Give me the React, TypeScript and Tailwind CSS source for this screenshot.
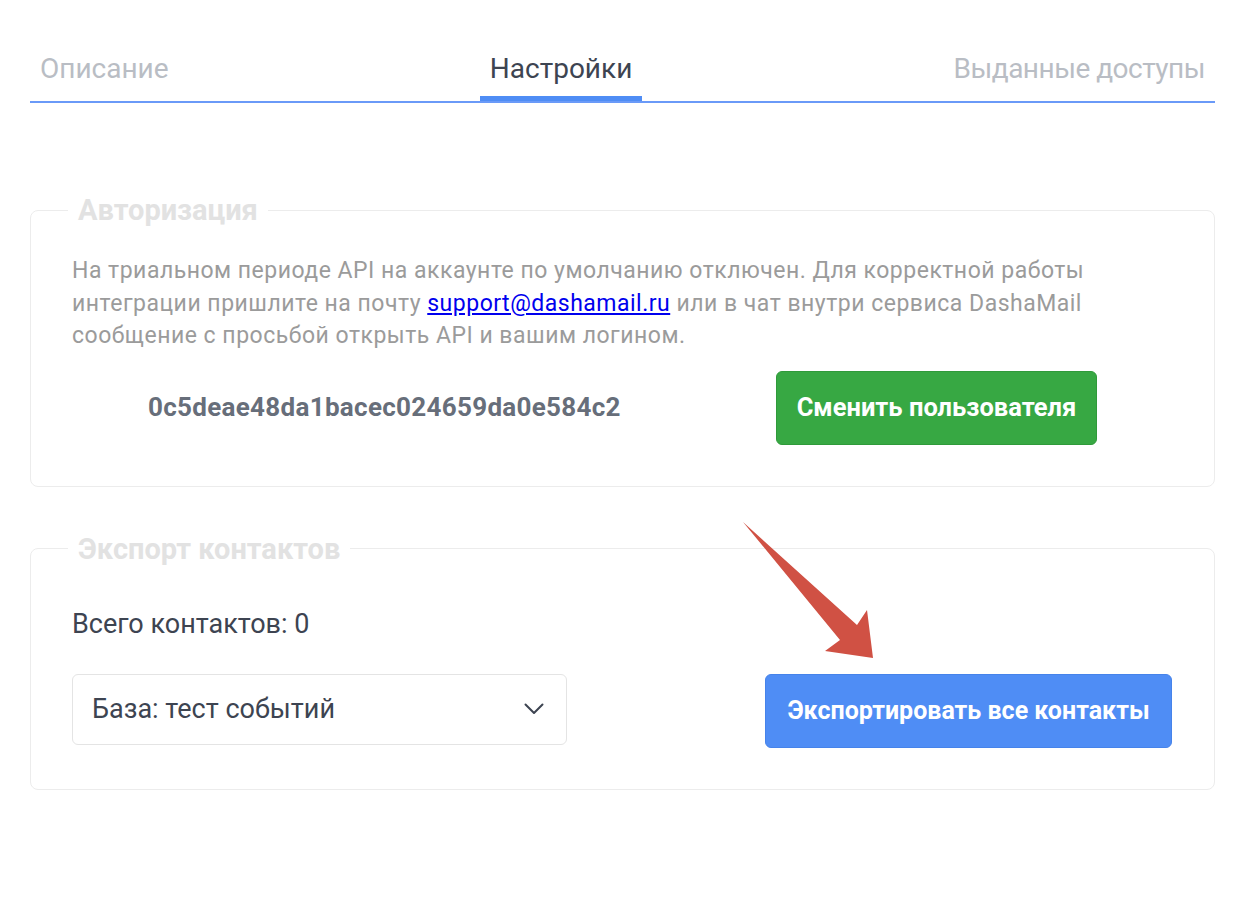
import React, { useState } from 'react';

const TABS = [
  { label: 'Описание', cls: '' },
  { label: 'Настройки', cls: '' },
  { label: 'Выданные доступы', cls: 'tracking-[-0.5px]' },
];

function Chevron() {
  return (
    <svg width="20" height="12" viewBox="0 0 20 12" fill="none">
      <polyline points="1.5,1.5 10,10 18.5,1.5" stroke="#3d4451" strokeWidth="2" strokeLinecap="round" strokeLinejoin="round" />
    </svg>
  );
}

function Pointer() {
  // red callout arrow aimed at the export button
  return (
    <svg className="absolute left-[740px] top-[518px] pointer-events-none" width="140" height="145" viewBox="740 518 140 145">
      <polygon points="743,522 857,625 867,610 873,658 825,651 840,640" fill="#d05144" />
    </svg>
  );
}

export default function App() {
  const [active, setActive] = useState(1);

  return (
    <div className="relative w-[1238px] h-[911px] bg-white" style={{ fontFamily: 'Roboto, "Noto Sans", sans-serif' }}>
      <div className="ml-[30px] w-[1185px] pt-[50px]">
        <div className="flex justify-between border-b-2 border-[#6a9af8]">
          {TABS.map((t, i) => (
            <button
              key={t.label}
              onClick={() => setActive(i)}
              className={
                'px-[10px] pb-[8px] text-[28px] leading-[38px] border-b-[5px] ' + t.cls + ' ' +
                (i === active ? 'border-[#4f8df5] text-[#3d4451]' : 'border-transparent text-[#b9bdc4]')
              }
            >
              {t.label}
            </button>
          ))}
        </div>

        <fieldset className="mt-[91px] border border-[#ececec] rounded-lg pl-[41px] pr-[41px] pt-[29px] pb-[41px]">
          <legend className="ml-[-4px] px-[10px] text-[29px] leading-[32px] font-bold text-[#e2e2e2]">Авторизация</legend>
          <p className="text-[23px] leading-[32.5px] tracking-[0.5px] text-[#9b9b9b]">
            На триальном периоде API на аккаунте по умолчанию отключен. Для корректной работы<br />
            интеграции пришлите на почту{' '}
            <a href="#" className="text-[#0000ee] underline">support@dashamail.ru</a>{' '}
            или в чат внутри сервиса DashaMail<br />
            сообщение с просьбой открыть API и вашим логином.
          </p>
          <div className="mt-[18px] flex items-center justify-between px-[76px]">
            <span className="text-[26px] tracking-[0.3px] font-bold text-[#676e7a]">0c5deae48da1bacec024659da0e584c2</span>
            <button className="h-[74px] w-[321px] rounded-md border border-[#2f9a3a] bg-[#37a843] text-[25.5px] font-bold text-white">
              Сменить пользователя
            </button>
          </div>
        </fieldset>

        <fieldset className="mt-[46px] border border-[#ececec] rounded-lg pl-[41px] pr-[41px] pt-[42px] pb-[41px]">
          <legend className="ml-[-4px] px-[10px] text-[29px] leading-[32px] font-bold text-[#e2e2e2]">Экспорт контактов</legend>
          <div className="text-[27px] leading-[34px] text-[#3d4451]">Всего контактов: 0</div>
          <div className="mt-[33px] flex items-start justify-between">
            <div className="flex h-[71px] w-[495px] items-center justify-between rounded-md border border-[#e4e4e4] pl-[19px] pr-[22px]">
              <span className="text-[27px] text-[#3d4451]">База: тест событий</span>
              <Chevron />
            </div>
            <button className="mr-[1px] h-[74px] w-[407px] rounded-md border border-[#4683ea] bg-[#4f8df5] text-[25px] font-bold text-white">
              Экспортировать все контакты
            </button>
          </div>
        </fieldset>
      </div>
      <Pointer />
    </div>
  );
}
